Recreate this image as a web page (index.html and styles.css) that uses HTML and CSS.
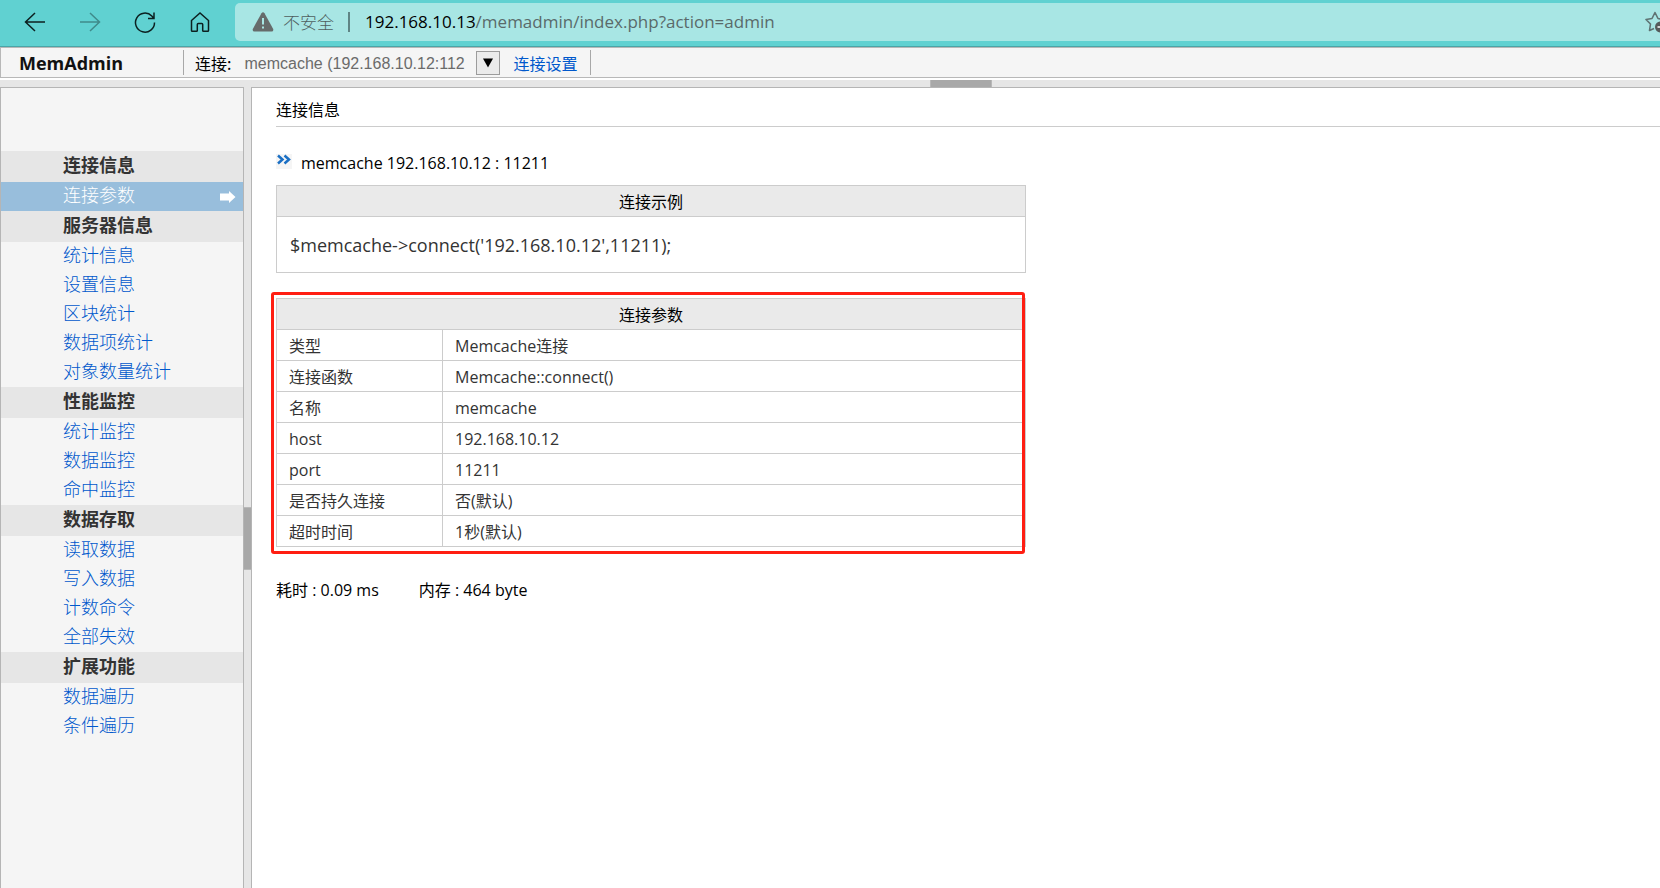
FILE: index.html
```html
<!DOCTYPE html>
<html lang="zh-CN">
<head>
<meta charset="utf-8">
<title>MemAdmin</title>
<link rel="stylesheet" href="styles.css">
</head>
<body>
<div class="browser">
  <div class="nav">
    <button class="nav-btn" type="button" aria-label="返回"><svg width="24" height="24" viewBox="0 0 24 24"><path d="M22 12H2.500M12 3L2.500 12L12 21"/></svg></button>
    <button class="nav-btn nav-off" type="button" aria-label="前进"><svg width="24" height="24" viewBox="0 0 24 24"><path d="M2 12H21.500M12 3L21.500 12L12 21"/></svg></button>
    <button class="nav-btn" type="button" aria-label="刷新"><svg width="24" height="24" viewBox="0 0 24 24"><path d="M21.500 12.500A9.500 9.500 0 1 1 18.800 6L20.500 8M21 2.500V8.500H15"/></svg></button>
    <button class="nav-btn" type="button" aria-label="主页"><svg width="24" height="24" viewBox="0 0 24 24"><path d="M3.500 10.500L12 3L20.500 10.500V20.500Q20.500 21.300 19.700 21.300H15.500Q14.700 21.300 14.700 20.500V14.500Q14.700 13.500 13.700 13.500H10.300Q9.300 13.500 9.300 14.500V20.500Q9.300 21.300 8.500 21.300H4.300Q3.500 21.300 3.500 20.500Z"/></svg></button>
  </div>
  <div class="address">
    <svg class="warn" width="22" height="20" viewBox="0 0 22 20"><path fill="#666b6b" d="M9.500 1.200Q11-.8 12.500 1.200L21.200 17Q21.800 19.500 19.500 19.500H2.500Q.2 19.500.8 17Z"/><path stroke="#a8e6e4" stroke-width="2" d="M11 6V12.500M11 14.500V16.500"/></svg>
    <span class="unsafe">不安全</span>
    <span class="bar"></span>
    <span class="url"><span class="host">192.168.10.13</span>/memadmin/index.php?action=admin</span>
    <svg class="star" width="15" height="22" viewBox="0 0 15 22"><path fill="none" stroke="#5f7373" stroke-width="1.600" stroke-linejoin="round" d="M19 8.500L13 7.500L10 1.500L7 7.500L1 8.500L5.500 13L4.500 19.500L9 17.500"/><circle cx="15.500" cy="16" r="5.500" fill="#555b5b"/><path stroke="#fff" stroke-width="1.500" d="M12.500 16H19"/></svg>
  </div>
</div>
<header class="top">
  <div class="logo">MemAdmin</div>
  <div class="conn">
    <label for="conn">连接:</label>
    <input id="conn" class="combo" type="text" value="memcache (192.168.10.12:112" readonly>
    <button class="drop" type="button" aria-label="选择连接"><svg width="12" height="10" viewBox="0 0 12 10"><path d="M1 .5H11L6 9.500Z"/></svg></button>
    <a class="set" href="#">连接设置</a>
  </div>
</header>
<div class="hsplit"><span class="hgrip"></span></div>
<div class="main">
  <nav class="side">
    <h2>连接信息</h2>
    <a class="on" href="#">连接参数<svg width="16" height="12" viewBox="0 0 16 12"><path fill="#fff" d="M0 2.500H9V0L15.500 6L9 12V9.500H0Z"/></svg></a>
    <h2>服务器信息</h2>
    <a href="#">统计信息</a>
    <a href="#">设置信息</a>
    <a href="#">区块统计</a>
    <a href="#">数据项统计</a>
    <a href="#">对象数量统计</a>
    <h2>性能监控</h2>
    <a href="#">统计监控</a>
    <a href="#">数据监控</a>
    <a href="#">命中监控</a>
    <h2>数据存取</h2>
    <a href="#">读取数据</a>
    <a href="#">写入数据</a>
    <a href="#">计数命令</a>
    <a href="#">全部失效</a>
    <h2>扩展功能</h2>
    <a href="#">数据遍历</a>
    <a href="#">条件遍历</a>
  </nav>
  <div class="vsplit"><span class="vgrip"></span></div>
  <main class="content">
    <h1>连接信息</h1>
    <div class="server"><svg width="16" height="15" viewBox="0 0 16 15"><path fill="#f5f5f5" d="M0 0H16V15H0Z"/><path fill="none" stroke="#1a6fc4" stroke-width="2.500" d="M2 1.500L6.500 5.500L2 9.500M8.500 1.500L13 5.500L8.500 9.500"/></svg><span class="en">memcache 192.168.10.12 : 11211</span></div>
    <table class="grid">
      <thead><tr><th>连接示例</th></tr></thead>
      <tbody><tr><td class="code">$memcache-&gt;connect('192.168.10.12',11211);</td></tr></tbody>
    </table>
    <div class="marked">
      <table class="grid">
        <thead><tr><th colspan="2">连接参数</th></tr></thead>
        <tbody>
          <tr><td class="key">类型</td><td><span class="en">Memcache</span>连接</td></tr>
          <tr><td class="key">连接函数</td><td><span class="en">Memcache::connect()</span></td></tr>
          <tr><td class="key">名称</td><td><span class="en">memcache</span></td></tr>
          <tr><td class="key"><span class="en">host</span></td><td><span class="en">192.168.10.12</span></td></tr>
          <tr><td class="key"><span class="en">port</span></td><td><span class="en">11211</span></td></tr>
          <tr><td class="key">是否持久连接</td><td>否<span class="en">(</span>默认<span class="en">)</span></td></tr>
          <tr><td class="key">超时时间</td><td><span class="en">1</span>秒<span class="en">(</span>默认<span class="en">)</span></td></tr>
        </tbody>
      </table>
      <div class="frame"></div>
    </div>
    <div class="stats">
      <span>耗时<span class="en"> : 0.09 ms</span></span>
      <span>内存<span class="en"> : 464 byte</span></span>
    </div>
  </main>
</div>
</body>
</html>
```
FILE: styles.css
```css
* { box-sizing: border-box; }
body {
  margin: 0;
  min-height: 100vh;
  display: flex;
  flex-direction: column;
  overflow-x: hidden;
  background: #fff;
  color: #000;
  font: 16px/24px "Noto Sans CJK SC", sans-serif;
}
h1, h2 { margin: 0; }
a { color: #0058cc; text-decoration: none; }
button { padding: 0; border: 0; background: none; }
svg { display: block; flex: none; overflow: hidden; }
.en { font-family: "Open Sans", "Noto Sans CJK SC", sans-serif; }

.browser {
  display: flex;
  height: 47px;
  padding-top: 3px;
  background: #60d1d1;
  border-bottom: 1px solid #4aa5a8;
}
.nav { flex: none; width: 235px; height: 37px; padding-left: 23px; display: flex; align-items: center; gap: 31px; }
.nav-btn { width: 24px; height: 24px; }
.nav-btn path { fill: none; stroke: #0c2020; stroke-width: 1.500; }
.nav-off path { stroke: #3f8a8a; }
.address {
  flex: 1;
  display: flex;
  align-items: center;
  height: 38px;
  padding-left: 17px;
  background: #a8e6e4;
  border-radius: 5px 0 0 5px;
}
.unsafe { margin-left: 9px; color: #4f5f5f; font-size: 17px; font-weight: 300; }
.bar { width: 2px; height: 20px; margin: 0 15px 0 14px; background: #5f8585; }
.url { color: #5a6a6a; font: 17px/24px "Open Sans", sans-serif; }
.host { color: #000; }
.star { margin-left: auto; }

.top {
  display: flex;
  align-items: center;
  height: 31px;
  border: 1px solid #b8b8b8;
  border-right: 0;
  background: #f5f5f5;
}
.logo { width: 182px; padding: 1px 0 0 18px; font: bold 18px/24px "Open Sans", sans-serif; color: #111; }
.conn {
  display: flex;
  align-items: center;
  height: 25px;
  padding: 0 13px 0 11px;
  border: solid #a8a8a8;
  border-width: 0 1px;
}
.combo {
  width: 232px;
  margin-left: 13px;
  padding: 2px 0 0;
  border: 0;
  background: none;
  color: #6b6b6b;
  font: 16px/22px "Liberation Sans", sans-serif;
}
.drop { display: flex; align-items: center; justify-content: center; width: 24px; height: 24px; border: 1px solid #9c9c9c; background: #ebebeb; }
.set { margin-left: 13px; }

.hsplit { height: 9px; border-top: 2px solid #fff; background: #e6e6e6; }
.hgrip { display: block; width: 62px; height: 7px; margin-left: 56%; background: #a8a8a8; border: solid #b8b8b8; border-width: 0 1px; }

.main { flex: 1; display: flex; background: #e6e6e6; }
.side {
  flex: none;
  width: 244px;
  padding-top: 63px;
  border: 1px solid #b5b5b5;
  border-bottom: 0;
  background: #f5f5f5;
}
.side h2, .side a { display: flex; align-items: center; justify-content: space-between; padding: 0 7px 6px 62px; font-size: 18px; }
.side h2 { height: 31px; background: #e6e6e6; color: #333; font-weight: bold; }
.side a { height: 29px; font-weight: 300; }
.side svg { margin-top: 6px; }
.side .on { background: #98bedc; color: #fff; }
.vsplit { flex: none; width: 7px; display: flex; flex-direction: column; }
.vsplit::before { content: ""; flex: 420; }
.vsplit::after { content: ""; flex: 318; }
.vgrip { height: 63px; background: #a8a8a8; border: solid #b8b8b8; border-width: 1px 0; }

.content { flex: 1; padding-left: 24px; border: solid #b5b5b5; border-width: 1px 0 0 1px; background: #fff; }
.content h1 { padding: 9px 0 5px; border-bottom: 1px solid #ccc; font-size: 16px; font-weight: normal; }
.server { display: flex; gap: 9px; padding: 27px 0 12px; }
.server .en { line-height: 19px; }
.grid { width: 750px; border-collapse: collapse; color: #333; }
.server + .grid { margin-bottom: 25px; }
.grid th, .grid td { height: 31px; padding: 0 12px; border: 1px solid #ccc; text-align: left; line-height: 24px; }
.grid th { background: #eaeaea; color: #000; font-weight: normal; text-align: center; }
.grid .key { width: 166px; }
.grid .code { height: 56px; padding: 0 13px; font: 18px/24px "Open Sans", sans-serif; }
.marked { position: relative; width: 750px; }
.frame { position: absolute; inset: -6px 1px -7px -5px; border: 3px solid #ff1e12; border-radius: 3px; }
.stats { display: flex; gap: 40px; padding-top: 30px; }
```
